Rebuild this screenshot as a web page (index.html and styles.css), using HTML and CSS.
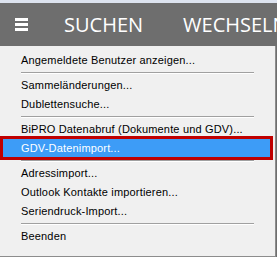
FILE: index.html
```html
<!DOCTYPE html>
<html>
  <head>
    <link rel="stylesheet" href="styles.css">
  </head>
  <body>
    <div class="top-strip"></div>
    <div class="nav-bar">
      <div class="burger"><span></span><span></span><span></span></div>
      <div class="nav-item">SUCHEN</div>
      <div class="nav-item">WECHSELN</div>
    </div>
    <ul class="menu">
      <li>Angemeldete Benutzer anzeigen...</li>
      <li class="sep"></li>
      <li>Sammeländerungen...</li>
      <li>Dublettensuche...</li>
      <li class="sep"></li>
      <li>BiPRO Datenabruf (Dokumente und GDV)...</li>
      <li class="active">GDV-Datenimport...</li>
      <li class="sep"></li>
      <li>Adressimport...</li>
      <li>Outlook Kontakte importieren...</li>
      <li>Seriendruck-Import...</li>
      <li class="sep"></li>
      <li>Beenden</li>
    </ul>
  </body>
</html>
```
FILE: styles.css
```css
html, body {
  margin: 0;
  height: 100%;
  overflow: hidden;
}
body {
  background: #6e6e6e;
}
.top-strip {
  height: 3px;
  background: #dde3ef;
}
.nav-bar {
  height: 43px;
  display: flex;
  align-items: center;
  gap: 40px;
  padding-left: 15px;
  white-space: nowrap;
  font-family: "Open Sans", sans-serif;
  font-size: 20px;
  color: #fff;
}
.nav-item {
  flex: none;
}
.burger {
  flex: none;
  width: 13px;
  display: flex;
  flex-direction: column;
  gap: 2px;
  margin-right: -4px;
}
.burger span {
  display: block;
  height: 3px;
  background: #fff;
}
.menu {
  list-style: none;
  margin: 0;
  padding: 4px 0 11px 0;
  width: 275px;
  background: #f0f0f0;
  border-right: 1px solid #8c8c8c;
  border-bottom: 1px solid #8c8c8c;
  font-family: "Liberation Sans", Arial, sans-serif;
  font-size: 11px;
  letter-spacing: 0.17px;
  color: #000;
}
.menu li {
  height: 19px;
  box-sizing: border-box;
  padding: 1px 0 0 21px;
  line-height: 18px;
  white-space: nowrap;
}
.menu li.sep {
  height: 2px;
  padding: 0;
  margin: 3px 21px 1px 21px;
  border-top: 1px solid #a0a0a0;
  border-bottom: 1px solid #fff;
}
.menu li.active {
  height: 24px;
  margin: -2px 2px -3px 0;
  padding-left: 18px;
  border: 3px solid #c00000;
  background: #3d9cf7;
  color: #fff;
  line-height: 18px;
  padding-top: 0;
}
```
